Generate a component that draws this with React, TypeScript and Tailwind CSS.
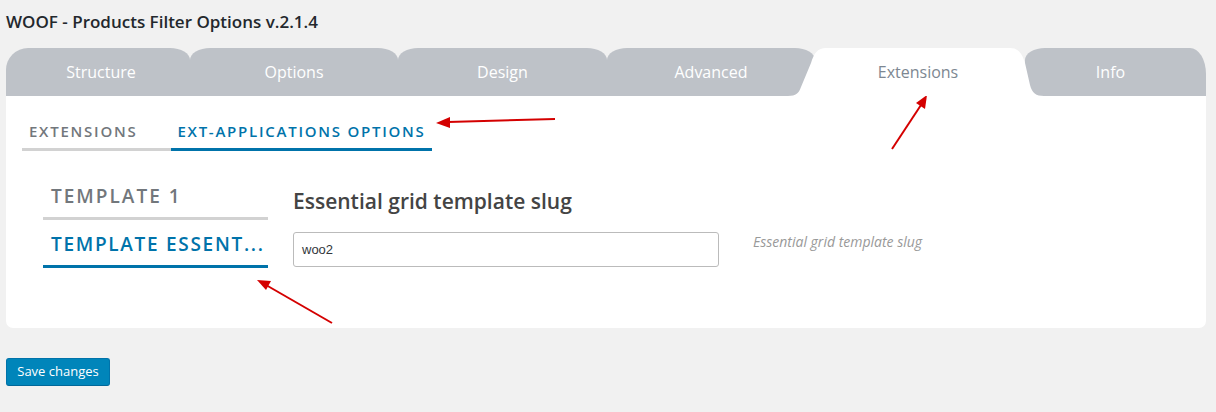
export default function App() {
  return (
    <div className="relative w-[1216px] min-h-[412px] bg-[#f1f1f1] font-['Open_Sans',sans-serif]">
      <div className="pl-[6px] pt-[10px] leading-[24px] text-[17px] font-semibold text-[#23282d]">
        WOOF - Products Filter Options v.2.1.4
      </div>

      <div className="mx-[6px] mt-[14px] w-[1200px]">
        {/* main tabs */}
        <div className="relative flex h-[48px] text-[16px] text-white">
          <div className="flex w-[184px] items-center justify-center rounded-tl-[22px_22px] rounded-tr-[20px_12px] bg-[#bec2c8] pl-[6px]">
            Structure
          </div>
          <div className="flex w-[208px] items-center justify-center rounded-t-[20px_12px] bg-[#bec2c8]">
            Options
          </div>
          <div className="flex w-[209px] items-center justify-center rounded-t-[20px_12px] bg-[#bec2c8]">
            Design
          </div>
          <div className="flex w-[208px] items-center justify-center rounded-tl-[20px_12px] rounded-tr-[20px_12px] bg-[#bec2c8]">
            Advanced
          </div>
          <div className="relative z-10 flex w-[210px] items-center justify-center">
            <svg
              className="absolute left-[-30px] top-0"
              width="265"
              height="48"
              viewBox="0 0 265 48"
            >
              <path
                d="M3,48 C11,48 14,45 16,39 L26,15 C29,5 33,0 41,0 L225,0 C233,0 237,5 240,15 L245,37 C247,45 251,48 259,48 Z"
                fill="#ffffff"
              />
            </svg>
            <span className="relative pr-[4px] text-[#7d8792]">Extensions</span>
          </div>
          <div className="flex w-[181px] items-center justify-center rounded-tl-[20px_12px] rounded-tr-[16px_26px] bg-[#bec2c8] pr-[10px]">
            Info
          </div>
        </div>

        {/* panel */}
        <div className="h-[232px] rounded-b-[7px] bg-white pl-[16px] pt-[24px]">
          <div className="flex text-[15px] font-semibold uppercase leading-[22px] tracking-[1.75px]">
            <div className="border-b-[3px] border-[#d2d2d2] pb-[6px] pl-[7px] pr-[34px] text-[#72777c]">
              Extensions
            </div>
            <div className="border-b-[3px] border-[#0073aa] px-[6px] pb-[6px] text-[#0073aa]">
              Ext-applications options
            </div>
          </div>

          <div className="mt-[21px] flex pl-[21px]">
            <div className="w-[225px] text-[19px] font-semibold uppercase leading-[26px] tracking-[1.7px]">
              <div className="border-b-[3px] border-[#d2d2d2] pb-[8px] pl-[8px] pt-[11px] tracking-[2px] text-[#72777c]">
                Template 1
              </div>
              <div className="border-b-[3px] border-[#0073aa] pb-[8px] pl-[8px] pt-[11px] text-[#0073aa] whitespace-nowrap">
                Template essent...
              </div>
            </div>

            <div className="ml-[25px] pt-[15px]">
              <div className="text-[21px] font-semibold leading-[28px] text-[#444]">
                Essential grid template slug
              </div>
              <div className="mt-[17px] flex items-start">
                <div className="flex h-[35px] w-[426px] items-center rounded-[3px] border border-[#bbb] px-[8px] font-['Liberation_Sans',Arial,sans-serif] text-[13px] text-[#32373c]">
                  woo2
                </div>
                <div className="ml-[34px] text-[14px] italic leading-[20px] text-[#999]">
                  Essential grid template slug
                </div>
              </div>
            </div>
          </div>
        </div>

        <button className="mt-[30px] h-[28px] w-[104px] rounded-[3px] border border-[#0073aa] border-b-[#006799] bg-[#0085ba] text-[13px] text-white">
          Save changes
        </button>
      </div>

      {/* annotation arrows */}
      <svg
        className="pointer-events-none absolute left-0 top-0"
        width="1216"
        height="412"
        viewBox="0 0 1216 412"
      >
        <g stroke="#d40000" strokeWidth="2" fill="#d40000">
          <line x1="555" y1="119" x2="448" y2="122" />
          <polygon points="436,123 450,117 450,128" stroke="none" />
          <line x1="892" y1="149" x2="921" y2="105" />
          <polygon points="927,95 916,103 925,109" stroke="none" />
          <line x1="332" y1="323" x2="266" y2="285" />
          <polygon points="257,280 271,281 266,290" stroke="none" />
        </g>
      </svg>
    </div>
  );
}
